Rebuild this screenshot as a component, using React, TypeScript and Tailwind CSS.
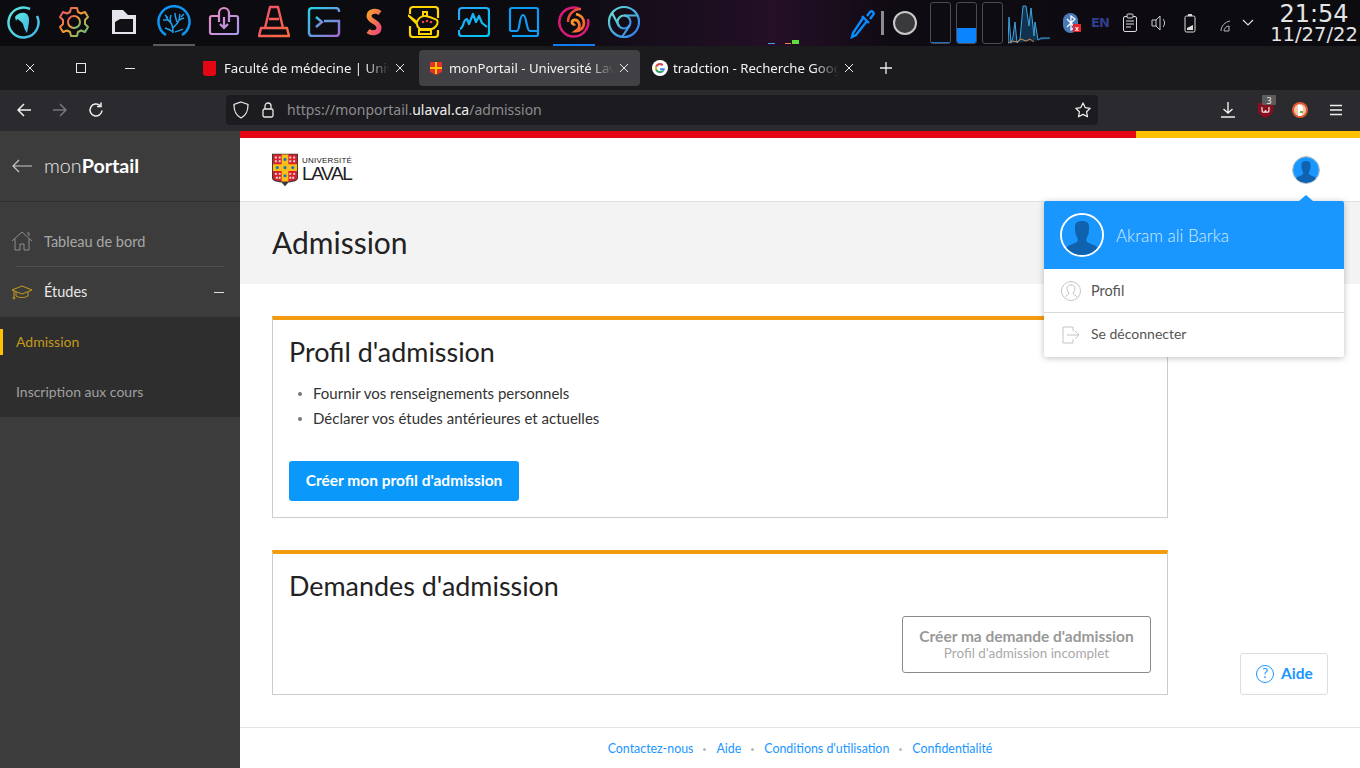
import type { ReactNode } from 'react';

const FONT = "font-['Lato','Noto_Sans',sans-serif]";

function Grad({ id, from, to, mid }: { id: string; from: string; to: string; mid?: string }) {
  return (
    <defs>
      <linearGradient id={id} x1="0" y1="0" x2="1" y2="1">
        <stop offset="0" stopColor={from} />
        {mid && <stop offset="0.5" stopColor={mid} />}
        <stop offset="1" stopColor={to} />
      </linearGradient>
    </defs>
  );
}

const DOCK: { key: string; mark?: string; node: ReactNode }[] = [
  {
    key: 'manjaro',
    node: (
      <svg width="34" height="34" viewBox="0 0 34 34" fill="none">
        <Grad id="g1" from="#5ee7df" to="#3fb8e8" />
        <path d="M30 11a15 15 0 1 1-7-7" stroke="url(#g1)" strokeWidth="2.500" />
        <path d="M8 12c2-3 6-5 10-4 3 1 4 4 4 7 0 4-1 8-2 13-2-3-3-5-4-9-1-2-3-3-4-4l-2-1-1 2z" fill="url(#g1)" />
      </svg>
    ),
  },
  {
    key: 'settings',
    node: (
      <svg width="34" height="34" viewBox="0 0 34 34" fill="none">
        <Grad id="g2" from="#e84a6f" to="#4fc98a" mid="#f39c2d" />
        <circle cx="17" cy="17" r="6" stroke="url(#g2)" strokeWidth="2" />
        <path
          d="M14 3h6l1 4 3 1.500 4-1.500 3 5-3 3v4l3 3-3 5-4-1.500-3 1.500-1 4h-6l-1-4-3-1.500-4 1.500-3-5 3-3v-4l-3-3 3-5 4 1.500 3-1.500z"
          stroke="url(#g2)"
          strokeWidth="2"
          strokeLinejoin="round"
        />
      </svg>
    ),
  },
  {
    key: 'files',
    node: (
      <svg width="26" height="26" viewBox="0 0 26 26">
        <path d="M1 1h11l5 5h8v19H1z" fill="#e4e4ec" />
        <path d="M4 23V13l5-3h13v13z" fill="#111115" />
      </svg>
    ),
  },
  {
    key: 'coral',
    mark: 'bg-[#5a5a5e]',
    node: (
      <svg width="34" height="34" viewBox="0 0 34 34" fill="none">
        <path d="M9 30A15.500 15.500 0 1 1 25 30" stroke="#0f96f5" strokeWidth="2.500" />
        <path
          d="M16 28c0-4 0-7-2-10-2-2-4-3-5-7M14 18c-1-2-1-5 0-8M12 15l-6 0M16 23c2-3 5-4 6-8 1-2 0-4 1-6M20 17c-1-3-2-5-2-9M22 15l5-2M16 27c-2-2-5-3-8-4M18 27c2-1 5-1 8-3M24 12l3-3M11 13l-3-3"
          stroke="#1c9ee8"
          strokeWidth="1.500"
        />
      </svg>
    ),
  },
  {
    key: 'install',
    node: (
      <svg width="32" height="32" viewBox="0 0 32 32" fill="none">
        <Grad id="g3" from="#ef86c0" to="#a79af0" />
        <path
          d="M11 10H4a2 2 0 0 0-2 2v14a2 2 0 0 0 2 2h24a2 2 0 0 0 2-2V12a2 2 0 0 0-2-2h-7M11 16V7a5 5 0 0 1 10 0v9M16 11v10M12 18l4 4 4-4"
          stroke="url(#g3)"
          strokeWidth="2.200"
        />
      </svg>
    ),
  },
  {
    key: 'vlc',
    node: (
      <svg width="32" height="34" viewBox="0 0 32 34" fill="none">
        <Grad id="g4" from="#f0506e" to="#ff6a3d" />
        <path
          d="M12 2h8l5 21h4l2 8H1l2-8h4zM11 14h10M7 23h18"
          stroke="url(#g4)"
          strokeWidth="2.400"
          strokeLinejoin="round"
        />
      </svg>
    ),
  },
  {
    key: 'terminal',
    node: (
      <svg width="34" height="30" viewBox="0 0 34 30" fill="none">
        <Grad id="g5" from="#1fd6e8" to="#a36ad6" />
        <path
          d="M32 5V4a3 3 0 0 0-3-3H5a3 3 0 0 0-3 3v22a3 3 0 0 0 3 3h24a3 3 0 0 0 3-3V14H17"
          stroke="url(#g5)"
          strokeWidth="2.400"
        />
        <path d="M9 10l6 5-6 5" stroke="url(#g5)" strokeWidth="2.400" />
      </svg>
    ),
  },
  {
    key: 'sublime',
    node: (
      <svg width="18" height="28" viewBox="0 0 18 28" fill="none">
        <Grad id="g6" from="#f5a02d" to="#f0457a" />
        <path d="M15 5C11 2 4 3 4 8c0 6 10 5 10 12 0 5-7 6-11 3" stroke="url(#g6)" strokeWidth="5" />
      </svg>
    ),
  },
  {
    key: 'genie',
    node: (
      <svg width="32" height="32" viewBox="0 0 32 32" fill="none">
        <path d="M2 8V4a3 3 0 0 1 3-3h22a3 3 0 0 1 3 3v8M2 20v8a3 3 0 0 0 3 3h22a3 3 0 0 0 3-3v-4" stroke="#ffd400" strokeWidth="2.200" />
        <path d="M0 9l9 7c1-3 4-6 8-6s9 3 12 4c2 4-2 8-5 9H12c-3-2-3-4-3-5z" stroke="#ffd400" strokeWidth="2" />
        <path d="M11 24h12v4H11zM15 10V6h4v4" stroke="#ffd400" strokeWidth="2" />
        <circle cx="15" cy="16" r="1.300" fill="#ef4050" />
        <circle cx="19" cy="15" r="1.300" fill="#ef4050" />
        <circle cx="23" cy="16" r="1.300" fill="#ef4050" />
      </svg>
    ),
  },
  {
    key: 'monitor',
    node: (
      <svg width="32" height="32" viewBox="0 0 32 32" fill="none">
        <Grad id="g7" from="#2aa6ff" to="#00c8f0" />
        <path d="M1 14V5a3 3 0 0 1 3-3h24a3 3 0 0 1 3 3v22a3 3 0 0 1-3 3H4a3 3 0 0 1-3-3v-3" stroke="url(#g7)" strokeWidth="2.200" />
        <path d="M2 23c2-1 3-3 4-7 1-2 2-3 3-3l2 5 4-10 3 8 3-6 3 7 5 4" stroke="url(#g7)" strokeWidth="2.200" strokeLinejoin="round" />
      </svg>
    ),
  },
  {
    key: 'scope',
    node: (
      <svg width="32" height="32" viewBox="0 0 32 32" fill="none">
        <path
          d="M2 25V4a2 2 0 0 1 2-2h24a2 2 0 0 1 2 2v24a2 2 0 0 1-2 2H4M2 25h7c3 0 2-16 6-16s3 16 7 16h8"
          stroke="#0f9cf5"
          strokeWidth="2.200"
        />
      </svg>
    ),
  },
  {
    key: 'firefox',
    mark: 'bg-[#0f7cf0]',
    node: (
      <svg width="34" height="34" viewBox="0 0 34 34" fill="none">
        <Grad id="g8" from="#ffb020" to="#f0503a" />
        <path d="M22 3.500A14.500 14.500 0 1 0 31 14" stroke="#d81b74" strokeWidth="2.500" />
        <path d="M24 4c-8 0-13 6-13 13" stroke="#f0503a" strokeWidth="2.500" />
        <path d="M19 9c4 1 8 4 8 9 0 5-4 8-8 8 3-2 4-5 3-8-2-4-6-4-7-1 0 2 2 3 3 2" stroke="url(#g8)" strokeWidth="2.800" />
      </svg>
    ),
  },
  {
    key: 'chrome',
    node: (
      <svg width="34" height="34" viewBox="0 0 34 34" fill="none">
        <Grad id="g9" from="#68e0d0" to="#2a78f0" />
        <circle cx="17" cy="17" r="15" stroke="url(#g9)" strokeWidth="2.200" />
        <circle cx="17" cy="17" r="6.500" stroke="url(#g9)" strokeWidth="2.200" />
        <path d="M5 8l7 13M17 10.500h14M23 20l-8 12" stroke="url(#g9)" strokeWidth="2.200" />
      </svg>
    ),
  },
];

function TopPanel() {
  return (
    <div className="flex h-[46px] items-center bg-[linear-gradient(90deg,#0b0b10_0%,#0b0b10_40%,#1a0e1e_50%,#240f27_57%,#0f0b12_66%,#0b0b10_100%)]">
      <div className="ml-[-1px] flex">
        {DOCK.map((item) => (
          <div key={item.key} className="relative flex h-[46px] w-[50px] items-center justify-center pb-[2px]">
            {item.node}
            {item.mark && <div className={`absolute bottom-0 left-[4px] h-[2px] w-[42px] ${item.mark}`} />}
          </div>
        ))}
      </div>
      <div className="relative h-full w-[204px]">
        <div className="absolute bottom-[2px] left-[119px] flex items-end">
          <div className="h-[1px] w-[7px] bg-[#4a9be8]" />
          <div className="ml-[10px] h-[1px] w-[6px] bg-[#e8834a]" />
          <div className="ml-[1px] h-[4px] w-[7px] bg-[#5ee03c]" />
        </div>
      </div>
      <div className="flex items-center">
        <svg width="26" height="32" viewBox="0 0 26 32" fill="none" className="ml-[-2px]">
          <path d="M13 11L3 26l-1 4 4-2 11-14M12 9l7 7M17 9l3-4c2-2 5 1 3 3l-3 4" stroke="#0a8cff" strokeWidth="2.400" />
        </svg>
        <div className="ml-[5px] h-[24px] w-[3px] bg-[#8c8c90]" />
        <div className="ml-[9px] h-[24px] w-[24px] rounded-full border-2 border-[#c8c8c8] bg-[#3a3a3c]" />
        <div className="ml-[13px] flex gap-[5px]">
          <div className="flex h-[42px] w-[21px] items-end rounded-[3px] border border-[#4c4c50] bg-[#0d0d11]">
            <div className="h-[1px] w-full bg-[#1f6fc4]" />
          </div>
          <div className="flex h-[42px] w-[21px] items-end overflow-hidden rounded-[3px] border border-[#4c4c50] bg-[#0d0d11]">
            <div className="h-[15px] w-full bg-[#0a84ff]" />
          </div>
          <div className="h-[42px] w-[21px] rounded-[3px] border border-[#4c4c50] bg-[#0d0d11]" />
        </div>
        <svg width="42" height="42" viewBox="0 0 42 42" fill="none" className="ml-[5px]">
          <path d="M0 42V41l1-26 2 26 2-6 2-15 2 21 3-4 3-33h3l3 20 2-18 3 28 1-14 3 18 3-2h10v1z" fill="#12334e" />
          <path d="M0 41l1-26 2 26 2-6 2-15 2 21 3-4 3-33h3l3 20 2-18 3 28 1-14 3 18 3-2h9" stroke="#3fa4e0" strokeWidth="1" />
          <path d="M0 41l4-2 5 1 4-3 5 2 4-2 4 3" stroke="#d9853f" strokeWidth="1" />
        </svg>
        <div className="relative ml-[13px] flex h-[20px] w-[15px] items-center justify-center rounded-[8px] bg-[#4a7ab8]">
          <svg width="10" height="16" viewBox="0 0 10 16" fill="none">
            <path d="M1 4l8 8-4 3V1l4 3-8 8" stroke="#fff" strokeWidth="1.200" />
          </svg>
          <div className="absolute bottom-[1px] right-[-3px] flex h-[8px] w-[8px] items-center justify-center bg-[#e8252f] font-['Liberation_Sans',sans-serif] text-[7px] leading-none font-bold text-white">
            x
          </div>
        </div>
        <span className="ml-[13px] w-[16px] font-['DejaVu_Sans',sans-serif] text-[13px] font-bold tracking-[-1px] text-[#2f3f8c]">EN</span>
        <svg width="16" height="20" viewBox="0 0 16 20" fill="none" stroke="#dcdcdc" className="ml-[15px]">
          <rect x="1.500" y="3.500" width="13" height="15" rx="1.500" />
          <rect x="5" y="1" width="6" height="4" rx="1" fill="#111" />
          <path d="M4 8h8M4 11h8M4 14h5" />
        </svg>
        <svg width="18" height="16" viewBox="0 0 18 16" fill="none" stroke="#cfcfcf" className="ml-[13px]">
          <path d="M1 5h4v6H1zM5 5l4-4v14l-4-4M12 4c2 2 2 6 0 8" />
        </svg>
        <svg width="12" height="20" viewBox="0 0 12 20" fill="none" className="ml-[15px]">
          <rect x="1" y="3" width="10" height="16" rx="1.500" stroke="#dcdcdc" />
          <path d="M4 1h4v2H4z" fill="#dcdcdc" />
          <path d="M3 15l6-3v5H3z" fill="#dcdcdc" />
        </svg>
        <svg width="12" height="12" viewBox="0 0 12 12" fill="none" stroke="#b8b8b8" className="ml-[24px] mt-[6px]">
          <path d="M1 11C1 6 5 2 10 1M4 11c0-2 2-5 5-5v5z" />
        </svg>
        <svg width="12" height="8" viewBox="0 0 12 8" fill="none" stroke="#dcdcdc" strokeWidth="1.200" className="ml-[10px]">
          <path d="M1 1l5 5 5-5" />
        </svg>
        <div className="ml-[14px] flex w-[92px] flex-col items-center font-['DejaVu_Sans',sans-serif] text-[#e4e4e4]">
          <span className="mt-[-1px] text-[24px] leading-[24px]">21:54</span>
          <span className="whitespace-nowrap text-[19.500px] leading-[18px]">11/27/22</span>
        </div>
      </div>
    </div>
  );
}

function CloseX({ className }: { className?: string }) {
  return (
    <svg width="10" height="10" viewBox="0 0 10 10" fill="none" stroke="#e8e8e8" className={className}>
      <path d="M1 1l8 8M9 1l-8 8" />
    </svg>
  );
}

function Tab({
  favicon,
  title,
  active,
  width,
}: {
  favicon: ReactNode;
  title: string;
  active?: boolean;
  width: string;
}) {
  return (
    <div className={`flex h-[36px] shrink-0 items-center rounded-[4px] ${width} ${active ? 'bg-[#414044] pl-[9px]' : 'pl-[8px]'}`}>
      <div className="flex w-[21px] shrink-0 justify-start">{favicon}</div>
      <div className="min-w-0 flex-1 overflow-hidden whitespace-nowrap pt-[1px] text-[13.200px] text-[#f2f2f2] [mask-image:linear-gradient(to_right,black_85%,transparent)]">
        {title}
      </div>
      <CloseX className="ml-[5px] mr-[11px] shrink-0" />
    </div>
  );
}

function TabBar() {
  return (
    <div className="flex h-[44px] items-center bg-[#1b1b1e] font-['Noto_Sans',sans-serif]">
      <div className="flex w-[195px] shrink-0 items-center pl-[25px]">
        <CloseX />
        <div className="ml-[41px] h-[10px] w-[10px] border border-[#e8e8e8]" />
        <div className="ml-[39px] h-[1px] w-[10px] bg-[#e8e8e8]" />
      </div>
      <div className="flex items-center gap-[3px]">
        <Tab
          width="w-[221px]"
          title="Faculté de médecine | Université"
          favicon={<div className="h-[15px] w-[13px] rounded-b-[3px] bg-[#e30613]" />}
        />
        <Tab
          width="w-[221px]"
          active
          title="monPortail - Université Laval"
          favicon={
            <svg width="12" height="13" viewBox="0 0 12 13" className="ml-[2px]">
              <path d="M0 0h12v10l-6 3-6-3z" fill="#e0322a" />
              <path d="M5 0h2v12H5zM0 5h12v2H0z" fill="#ffc300" />
            </svg>
          }
        />
        <div className="ml-[1px]">
          <Tab
            width="w-[221px]"
            title="tradction - Recherche Google"
            favicon={
              <svg width="16" height="16" viewBox="0 0 16 16">
                <circle cx="8" cy="8" r="8" fill="#fff" />
                <path d="M13 8.200H8V10h2.900A3.200 3.200 0 1 1 10 5.700l1.300-1.300A5 5 0 1 0 13 8.200z" fill="#4285f4" />
                <path d="M3.500 5.700A5 5 0 0 1 11.300 4.400L10 5.700a3.200 3.200 0 0 0-5 1z" fill="#ea4335" />
                <path d="M3.500 5.700l1.500 1a3.200 3.200 0 0 0 0 2.600l-1.500 1a5 5 0 0 1 0-4.600z" fill="#fbbc05" />
                <path d="M3.500 10.300l1.500-1a3.200 3.200 0 0 0 5 1l1.400 1.200a5 5 0 0 1-7.900-1.200z" fill="#34a853" />
              </svg>
            }
          />
        </div>
      </div>
      <svg width="12" height="12" viewBox="0 0 12 12" fill="none" stroke="#f0f0f0" strokeWidth="1.300" className="ml-[15px]">
        <path d="M6 0v12M0 6h12" />
      </svg>
    </div>
  );
}

function NavBar() {
  return (
    <div className="flex h-[40px] items-center bg-[#2b2a2e] font-['Noto_Sans',sans-serif]">
      <div className="flex w-[226px] shrink-0 items-center pl-[17px]">
        <svg width="14" height="14" viewBox="0 0 14 14" fill="none" stroke="#f0f0f0" strokeWidth="1.500">
          <path d="M14 7H1.500M7 1L1 7l6 6" />
        </svg>
        <svg width="14" height="14" viewBox="0 0 14 14" fill="none" stroke="#77767a" strokeWidth="1.500" className="ml-[22px]">
          <path d="M0 7h12.500M7 1l6 6-6 6" />
        </svg>
        <svg width="16" height="16" viewBox="0 0 16 16" fill="none" stroke="#f0f0f0" strokeWidth="1.500" className="ml-[21px]">
          <path d="M14 8.500A6 6 0 1 1 12 3.500M13 0.500v4h-4" />
        </svg>
      </div>
      <div className="flex h-[30px] w-[872px] items-center rounded-[4px] bg-[#1c1b1f] pl-[7px] pr-[7px]">
        <svg width="16" height="18" viewBox="0 0 16 18" fill="none" stroke="#e8e8e8" strokeWidth="1.300">
          <path d="M8 1l7 2.500c0 6-1 10.500-7 13.500C2 14 1 9.500 1 3.500z" />
        </svg>
        <svg width="12" height="16" viewBox="0 0 12 16" fill="none" stroke="#e8e8e8" strokeWidth="1.300" className="ml-[13px]">
          <rect x="1" y="7" width="10" height="8" rx="1.500" />
          <path d="M3 7V4a3 3 0 0 1 6 0v3" />
        </svg>
        <div className="ml-[13px] flex-1 pb-[2px] text-[14px] text-[#8d8c90]">
          https://monportail.<span className="text-[#f0f0f0]">ulaval.ca</span>/admission
        </div>
        <svg width="16" height="16" viewBox="0 0 16 16" fill="none" stroke="#f0f0f0" strokeWidth="1.200">
          <path d="M8 1l2.200 4.600 5 .7-3.600 3.500.9 5L8 12.400l-4.500 2.400.9-5L.8 6.300l5-.7z" strokeLinejoin="round" />
        </svg>
      </div>
      <svg width="14" height="16" viewBox="0 0 14 16" fill="none" stroke="#f0f0f0" strokeWidth="1.400" className="ml-[123px]">
        <path d="M7 0v11M2.500 7L7 11l4.500-4M0 15h14" />
      </svg>
      <div className="relative ml-[23px] h-[16px] w-[15px]">
        <svg width="15" height="16" viewBox="0 0 15 16">
          <path d="M0 1h15v8c0 3-4 5-7.500 7C4 14 0 12 0 9z" fill="#8a0f1e" />
          <path d="M4 5v3c0 3 3.500 3 3.500 0 0 3 3.500 3 3.500 0V5" fill="none" stroke="#eee" strokeWidth="1.200" />
        </svg>
        <div className="absolute left-[4px] top-[-7px] flex h-[10px] w-[14px] items-center justify-center rounded-[1px] bg-[#5c5c5c] text-[9px] leading-none text-[#f0f0f0]">
          3
        </div>
      </div>
      <svg width="16" height="16" viewBox="0 0 16 16" className="ml-[19px]">
        <circle cx="8" cy="8" r="8" fill="#de5833" />
        <circle cx="8" cy="8" r="6" fill="#f6c5a8" />
        <path d="M6 3c3-1 5 1 5 4s-1 6-2 7H6c1-3-1-7 0-11z" fill="#fff" />
        <path d="M8 9h3v2H8z" fill="#6bb536" />
      </svg>
      <svg width="14" height="12" viewBox="0 0 14 12" fill="none" stroke="#f0f0f0" strokeWidth="1.400" className="ml-[21px]">
        <path d="M1 1.500h12M1 6h12M1 10.500h12" />
      </svg>
    </div>
  );
}

function Avatar({ size, ring }: { size: number; ring: string }) {
  return (
    <div className={ring} style={{ width: size, height: size }}>
      <svg viewBox="0 0 40 40" className="h-full w-full rounded-full bg-[#1a96ff]">
        <path
          d="M20 6c5 0 7 2 7 6 0 4 0 7-2 10-1 2-1 4 0 5 3 2 9 3 11 6-3 5-9 7-16 7s-13-2-16-7c2-3 8-4 11-6 1-1 1-3 0-5-2-3-2-6-2-10 0-4 2-6 7-6z"
          fill="#0f62ad"
        />
      </svg>
    </div>
  );
}

function Logo() {
  return (
    <div className="flex items-start">
      <svg width="26" height="34" viewBox="0 0 27 34">
        <path d="M0 0h27v25c0 3-3 4-10 5l-3.500 4L10 30C3 29 0 28 0 25z" fill="#3a3a3a" />
        <path d="M1 1h25v24c0 2-3 3-9 4h-7c-6-1-9-2-9-4z" fill="#d8202c" />
        <path d="M10 1h7v28h-7zM1 11h25v7H1z" fill="#fbbd17" />
        <circle cx="13.500" cy="6" r="1.600" fill="#1678b8" />
        <circle cx="13.500" cy="14.500" r="1.600" fill="#1678b8" />
        <circle cx="13.500" cy="23" r="1.600" fill="#1678b8" />
        <circle cx="5.500" cy="14.500" r="1.600" fill="#1678b8" />
        <circle cx="21.500" cy="14.500" r="1.600" fill="#1678b8" />
        <g fill="#e8d8d8">
          <path d="M3 3h2v2H3zM7 3h2v2H7zM18 3h2v2h-2zM22 3h2v2h-2zM3 7h2v2H3zM7 7h2v2H7zM18 7h2v2h-2zM22 7h2v2h-2zM3 20h2v2H3zM7 20h2v2H7zM18 20h2v2h-2zM22 20h2v2h-2zM4 24h2v2H4zM7 24h2v2H7zM18 24h2v2h-2zM21 24h2v2h-2z" />
        </g>
      </svg>
      <div className="ml-[4px] mt-[3px] flex flex-col font-['Liberation_Sans',sans-serif] text-[#222]">
        <span className="text-[8px] leading-[9px] tracking-[0.2px]">UNIVERSITÉ</span>
        <span className="mt-[-1px] text-[19px] leading-[20px] tracking-[-1.400px]">LAVAL</span>
      </div>
    </div>
  );
}

function Sidebar() {
  return (
    <aside className="flex w-[240px] shrink-0 flex-col border-t border-[#2b2b2b] bg-[#3c3c3c]">
      <div className="flex h-[71px] items-center border-b border-[#2e2e2e] pb-[1px] pl-[12px]">
        <svg width="20" height="14" viewBox="0 0 20 14" fill="none" stroke="#c8c8c8" strokeWidth="1.200">
          <path d="M20 7H1M7 1L1 7l6 6" />
        </svg>
        <span className="ml-[12px] text-[19.700px] font-light text-[#e8e8e8]">
          mon<span className="font-bold text-white">Portail</span>
        </span>
      </div>
      <div className="mt-[14px] flex h-[50px] items-center pl-[12px]">
        <svg width="20" height="20" viewBox="0 0 20 20" fill="none" stroke="#8d8d8d">
          <path d="M0 10L10 1l10 9M3 8v11h5v-6h4v6h5V8M15 2h2v3" />
        </svg>
        <span className="ml-[12px] pt-[1px] text-[14.500px] text-[#a8a8a8]">Tableau de bord</span>
      </div>
      <div className="mx-[16px] h-[1px] bg-[#4e4e4e]" />
      <div className="flex h-[50px] items-center pl-[12px] pr-[16px]">
        <svg width="20" height="16" viewBox="0 0 20 16" fill="none" stroke="#c49a1c">
          <path d="M0 6l10-4 10 4-10 4zM4 8v4c3 2 9 2 12 0V8M2 7v6" />
          <circle cx="2" cy="14" r="1" />
        </svg>
        <span className="ml-[12px] flex-1 text-[14.500px] text-[#e8e8e8]">Études</span>
        <div className="h-[1px] w-[10px] bg-[#e0e0e0]" />
      </div>
      <div className="flex h-[100px] flex-col bg-[#2e2e2e]">
        <div className="relative flex h-[50px] items-center pb-[1px] pl-[16px]">
          <div className="absolute left-0 top-[12px] h-[26px] w-[3px] bg-[#ffc000]" />
          <span className="text-[14px] text-[#c39a1a]">Admission</span>
        </div>
        <div className="flex h-[50px] items-center pb-[1px] pl-[16px]">
          <span className="text-[14px] text-[#a0a0a0]">Inscription aux cours</span>
        </div>
      </div>
    </aside>
  );
}

function Card({ title, children, height }: { title: string; children: ReactNode; height: string }) {
  return (
    <section className={`flex flex-col border border-t-4 border-[#cccccc] border-t-[#f39c12] px-[16px] ${height}`}>
      <h2 className="mt-[15px] text-[26.900px] leading-[33px] text-[#222]">{title}</h2>
      {children}
    </section>
  );
}

function Dropdown() {
  return (
    <div className="absolute right-[16px] top-[70px] z-10 w-[300px] rounded-[2px] bg-white shadow-[0_1px_6px_rgba(0,0,0,0.25)]">
      <div className="absolute right-[31px] top-[-6px] h-0 w-0 border-x-[7px] border-b-[6px] border-x-transparent border-b-[#1a96ff]" />
      <div className="flex h-[68px] items-center rounded-t-[2px] bg-[#1a96ff] pl-[16px]">
        <Avatar size={44} ring="overflow-hidden rounded-full border-2 border-white" />
        <span className="ml-[12px] pt-[1px] text-[17px] font-light text-[#d5ecff]">Akram ali Barka</span>
      </div>
      <div className="flex h-[44px] items-center border-b border-[#d8d8d8] pl-[17px] text-[14.500px] text-[#555]">
        <svg width="20" height="20" viewBox="0 0 20 20" fill="none" stroke="#c4c4c4">
          <circle cx="10" cy="10" r="9.500" />
          <path d="M4 16c1-2 4-2 4-4-1-1-2-3-2-5 0-2 2-3 4-3s4 1 4 3c0 2-1 4-2 5 0 2 3 2 4 4" />
        </svg>
        <span className="ml-[10px]">Profil</span>
      </div>
      <div className="flex h-[44px] items-center pl-[18px] text-[14px] text-[#555]">
        <svg width="18" height="18" viewBox="0 0 18 18" fill="none" stroke="#c4c4c4">
          <path d="M11 5V1H1v16h10v-4M5 9h11M13 5l4 4-4 4" />
        </svg>
        <span className="ml-[11px] pb-[3px]">Se déconnecter</span>
      </div>
    </div>
  );
}

function Main() {
  return (
    <main className="relative flex min-w-0 flex-1 flex-col border-t border-[#2b2b2b] bg-white">
      <div className="flex h-[7px]">
        <div className="flex-1 bg-[#e30613]" />
        <div className="w-[224px] bg-[#ffc000]" />
      </div>
      <header className="flex h-[64px] items-center justify-between border-b border-[#e0e0e0] pl-[32px] pr-[40px]">
        <Logo />
        <Avatar size={28} ring="overflow-hidden rounded-full border border-[#b8b8b8]" />
      </header>
      <div className="flex h-[82px] items-center bg-[#f3f3f3] pb-[2px] pl-[32px]">
        <h1 className="text-[30px] leading-none text-[#222]">Admission</h1>
      </div>
      <div className="ml-[32px] mt-[32px] flex w-[896px] flex-col gap-[32px]">
        <Card title="Profil d'admission" height="h-[202px]">
          <ul className="mt-[13px] flex flex-col text-[15px] leading-[25px] text-[#333]">
            <li className="flex items-center">
              <span className="ml-[9px] h-[4px] w-[4px] rounded-full bg-[#777]" />
              <span className="ml-[11px]">Fournir vos renseignements personnels</span>
            </li>
            <li className="flex items-center">
              <span className="ml-[9px] h-[4px] w-[4px] rounded-full bg-[#777]" />
              <span className="ml-[11px]">Déclarer vos études antérieures et actuelles</span>
            </li>
          </ul>
          <button className="mt-[30px] h-[40px] w-[230px] rounded-[3px] bg-[#0b98fb] pb-[1px] text-[15.500px] font-bold text-white">
            Créer mon profil d'admission
          </button>
        </Card>
        <Card title="Demandes d'admission" height="h-[145px]">
          <div className="mt-[14px] flex justify-end">
            <div className="flex h-[57px] w-[249px] flex-col items-center justify-center rounded-[3px] border border-[#8a8a8a]">
              <span className="text-[15.500px] leading-[18px] font-bold text-[#999]">Créer ma demande d'admission</span>
              <span className="text-[13.500px] leading-[17px] text-[#aaa]">Profil d'admission incomplet</span>
            </div>
          </div>
        </Card>
      </div>
      <footer className="mt-auto flex h-[41px] items-center justify-center gap-[10px] border-t border-[#e4e4e4] pt-[2px] text-[12.400px] text-[#1a96ff]">
        <span>Contactez-nous</span>
        <span className="h-[3px] w-[3px] rounded-full bg-[#bbb]" />
        <span>Aide</span>
        <span className="h-[3px] w-[3px] rounded-full bg-[#bbb]" />
        <span>Conditions d'utilisation</span>
        <span className="h-[3px] w-[3px] rounded-full bg-[#bbb]" />
        <span>Confidentialité</span>
      </footer>
      <Dropdown />
      <div className="absolute bottom-[73px] right-[32px] flex h-[42px] w-[88px] items-center justify-center rounded-[3px] border border-[#dddddd] bg-white pl-[1px] text-[15.500px] font-bold text-[#1a96ff]">
        <span className="flex h-[18px] w-[18px] items-center justify-center rounded-full border-[1.500px] border-[#1a96ff] text-[13px] font-normal">
          ?
        </span>
        <span className="ml-[7px]">Aide</span>
      </div>
    </main>
  );
}

export default function App() {
  return (
    <div className={`flex h-[768px] w-full flex-col overflow-hidden bg-white ${FONT}`}>
      <TopPanel />
      <TabBar />
      <NavBar />
      <div className="flex min-h-0 flex-1">
        <Sidebar />
        <Main />
      </div>
    </div>
  );
}
